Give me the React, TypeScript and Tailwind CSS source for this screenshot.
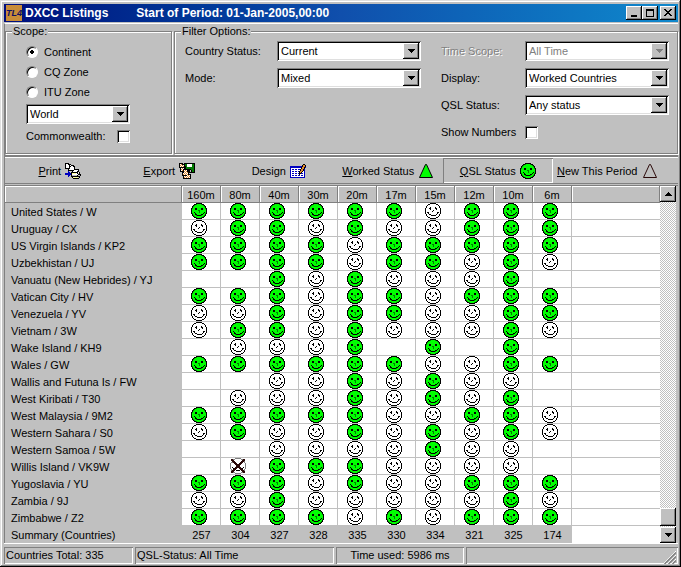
/**
 * DXCC listings window.
 * Filter panel, report toolbar, band/country confirmation grid and status bar.
 */
import { useState } from 'react'
import type { ReactNode } from 'react'
import clsx from 'clsx'

const SUNKEN =
  'bg-white shadow-[inset_1px_1px_0_#808080,inset_-1px_-1px_0_#fff,inset_2px_2px_0_#000,inset_-2px_-2px_0_#dfdfdf]'
const RAISED =
  'bg-[#c0c0c0] shadow-[inset_-1px_-1px_0_#000,inset_1px_1px_0_#fff,inset_-2px_-2px_0_#808080]'

const BANDS = ['160m', '80m', '40m', '30m', '20m', '17m', '15m', '12m', '10m', '6m']
const TOTALS = [257, 304, 327, 328, 335, 330, 334, 321, 325, 174]

// G = confirmed, W = worked, X = rejected, . = nothing
const COUNTRIES: [string, string][] = [
  ['United States / W', 'GGGGGGWGGG'],
  ['Uruguay / CX', 'WGGWGWWGGG'],
  ['US Virgin Islands / KP2', 'GGGGWGGGGG'],
  ['Uzbekhistan / UJ', 'GGGGWGGWGW'],
  ['Vanuatu (New Hebrides) / YJ', '..GWGWWWG.'],
  ['Vatican City / HV', 'GGGWGGWGGG'],
  ['Venezuela / YV', 'WWGWGGWWGG'],
  ['Vietnam / 3W', 'WGGWGWWWGW'],
  ['Wake Island / KH9', '.WWWG.G.G.'],
  ['Wales / GW', 'GGGGGGWWGG'],
  ['Wallis and Futuna Is / FW', '..WWGWGWW.'],
  ['West Kiribati / T30', '.WWWGWGWG.'],
  ['West Malaysia / 9M2', 'GGGGGWWGGW'],
  ['Western Sahara / S0', 'WGWWGWGWGW'],
  ['Western Samoa / 5W', '..WWWWGWW.'],
  ['Willis Island / VK9W', '.XGGGWWWW.'],
  ['Yugoslavia / YU', 'GGGWGWWGGG'],
  ['Zambia / 9J', 'WWGWWWWWGW'],
  ['Zimbabwe / Z2', 'GGGGWGWGGG'],
]

const PALETTE: Record<string, string> = {
  k: '#000000',
  K: '#2a0808',
  w: '#ffffff',
  e: '#00ff00',
  d: '#008000',
  n: '#007b00',
  s: '#808080',
  l: '#c0c0c0',
  b: '#0000c0',
  y: '#ffff9c',
  o: '#e08830',
}

const GREEN_FACE = [
  '.....kkkkkk.....',
  '...kkdeeeedkk...',
  '..kdeeeeeeeedk..',
  '.kdeeeeeeeeeedk.',
  '.keeeeeeeeeeeek.',
  'kdeekkeeeekkeedk',
  'keeekkeeeekkeeek',
  'keeeeeeddeeeeeek',
  'keeeeeeedeeeeeek',
  'keekeeeedeeeekek',
  'kdeekeeeeeeekedk',
  '.keekkeeeekkeek.',
  '.kdeedkkkkdeedk.',
  '..kdeeeeeeeedk..',
  '...kkdeeeedkk...',
  '.....kkkkkk.....',
]

const WHITE_FACE = [
  '.....kkkkkk.....',
  '...kkwwwwwwkk...',
  '..kwwwwwwwwwwk..',
  '.kwwwwwwwwwwwwk.',
  '.kwwwkwwwwkwwwk.',
  'kwwwkkwwwwkkwwwk',
  'kwwwwkwwwwwkwwwk',
  'kwwwwwwwkwwwwwwk',
  'kwwwwwwkwwwwwwwk',
  'kwkkwwwwwwwwkkwk',
  'kwwkwwwwwwwwkwwk',
  '.kwwkkwwwwwkwwk.',
  '.kwwwwkkkkkwwwk.',
  '..kwwwwwwwwwwk..',
  '...kkwwwwwwkk...',
  '.....kkkkkk.....',
]

const CROSSED_FACE = [
  '.....ssssss.....',
  '.KKsswwwwwwssKK.',
  '.KKKwwwwwwwwKKK.',
  '..KKKwwwwwwKKKs.',
  '.ssKKKwwwwKKKws.',
  'swwwKKKwwKKKwwws',
  'swwwwKKKKKKwwwws',
  'swwwwwKKKKwwwwws',
  'swwwwwKKKKwwwwws',
  'swkwwKKKKKKwwkws',
  'swwkKKKwwKKKkwws',
  '.swKKKwwwwKKKws.',
  '.sKKKwkkkkwKKKs.',
  '.KKKwwwwwwwwKKK.',
  '.KKsswwwwwwssKK.',
  '.....ssssss.....',
]

const PRINTER = [
  'kkkk............',
  'kwwkkk..........',
  'kwwwkwkkk.......',
  'kwwwkkwwkk......',
  'kwwwkwwwwk......',
  'kkkkkwwwwk......',
  '...kwwwwwkkkkk..',
  '...kkkkkkwwwwk..',
  '...b...kwwwwkk..',
  '...bb.kkkkkkkwk.',
  'bbbbbbkyyyywklk.',
  'bbbbbbkwwwwwwkkk',
  '...bb.klllllkllk',
  '...b..kkkkkkkkk.',
  '.......kyyyyylk.',
  '........kkkkkk..',
]

const EXPORT = [
  'kkkk.kkkkkkkkkkk',
  'kwokkknnwwwwwnnk',
  'kowowknnwwwwwnnk',
  'kwowokknwwwwwnnk',
  'kkkkkkknnnnnnnnk',
  '.kwowkknnnnnnnnk',
  '.kowkkkkkkkknnnk',
  '.kwokwowkkklknnk',
  '.kkkkowokkklknnk',
  '...kkwowokkkkkkk',
  '...kwowowk......',
  '...kowowokkk....',
  '...kkkkkwowk....',
  '....kwowowok....',
  '....kowowowk....',
  '....kkkkkkkk....',
]

const DESIGN = [
  '.............kk.',
  '............kook',
  'bbbbbbbbbbbbkook',
  'bbbbbbbbbbbkookb',
  'bwwwwwwwwwwkook.',
  'bwbbwbbwbbkookb.',
  'bwwwwwwwwwkookb.',
  'bwbbwbbwbkookwb.',
  'bwwwwwwwwkokwwb.',
  'bwbbwbbwbkkbbwb.',
  'bwwwwwwwwkwwwwb.',
  'bwbbwbbwbbwbbwb.',
  'bwwwwwwwwwwwwwb.',
  'bbbbbbbbbbbbbbb.',
]

function Bitmap({ rows }: { rows: string[] }) {
  return (
    <svg
      width={rows[0].length}
      height={rows.length}
      shapeRendering="crispEdges"
      className="block shrink-0"
      aria-hidden="true"
    >
      {rows.flatMap((row, y) =>
        [...row].map((c, x) =>
          c === '.' ? null : <rect key={`${x}-${y}`} x={x} y={y} width="1" height="1" fill={PALETTE[c]} />
        )
      )}
    </svg>
  )
}

function Triangle({ fill, stroke }: { fill: string; stroke: string }) {
  return (
    <svg width="16" height="16" className="block shrink-0" aria-hidden="true">
      <path d="M7.5 1.5 1.5 14.5H14.5L8.5 1.5Z" fill={fill} stroke={stroke} />
    </svg>
  )
}

function Arrow({ up, disabled }: { up?: boolean; disabled?: boolean }) {
  return (
    <svg width="7" height="4" shapeRendering="crispEdges" aria-hidden="true">
      <path d={up ? 'M3 0H4V1H5V2H6V3H7V4H0V3H1V2H2V1H3Z' : 'M0 0H7V1H6V2H5V3H4V4H3V3H2V2H1V1H0Z'} fill={disabled ? '#808080' : '#000'} />
    </svg>
  )
}

interface ComboProps {
  id: string
  label?: string
  options: string[]
  disabled?: boolean
  className?: string
}

function Combo({ id, label, options, disabled, className }: ComboProps) {
  return (
    <div className={clsx('relative h-5 shrink-0', className)}>
      <select
        id={id}
        aria-label={label}
        disabled={disabled}
        className={clsx(
          'block h-5 w-full appearance-none pr-5 pl-1 leading-5 outline-none',
          SUNKEN,
          disabled ? 'text-[#808080] opacity-100' : 'text-black'
        )}
      >
        {options.map((o) => (
          <option key={o}>{o}</option>
        ))}
      </select>
      <span
        className={clsx(
          'pointer-events-none absolute top-0.5 right-0.5 flex h-4 w-4 items-center justify-center',
          RAISED
        )}
      >
        <Arrow disabled={disabled} />
      </span>
    </div>
  )
}

function Field({ id, label, disabled, children }: { id: string; label: string; disabled?: boolean; children: ReactNode }) {
  return (
    <div className="flex h-5 items-center justify-between">
      <label htmlFor={id} className={clsx(disabled && 'text-[#808080] [text-shadow:1px_1px_0_#fff]')}>
        {label}
      </label>
      {children}
    </div>
  )
}

function Group({ title, className, children }: { title: string; className?: string; children: ReactNode }) {
  return (
    <fieldset
      className={clsx(
        'h-[130px] border border-[#808080] shadow-[1px_1px_0_#fff,inset_1px_1px_0_#fff]',
        className
      )}
    >
      <legend className="ml-1.5 bg-[#c0c0c0] px-px leading-[14px]">{title}</legend>
      {children}
    </fieldset>
  )
}

function ToolButton({ text, hotkey, active, onClick, children }: {
  text: string
  hotkey?: boolean
  active?: boolean
  onClick?: () => void
  children: ReactNode
}) {
  return (
    <button
      onClick={onClick}
      className={clsx(
        'flex h-[25px] items-center justify-center gap-1 pt-px whitespace-nowrap',
        active && 'shadow-[inset_1px_1px_0_#808080,inset_-1px_-1px_0_#fff]'
      )}
    >
      <span>
        {hotkey ? <span className="underline">{text[0]}</span> : text[0]}
        {text.slice(1)}
      </span>
      {children}
    </button>
  )
}

function TitleButton({ label, children }: { label: string; children: ReactNode }) {
  return (
    <button aria-label={label} className={clsx('flex h-3.5 w-4 items-center justify-center', RAISED)}>
      <svg width="10" height="10" shapeRendering="crispEdges" fill="none" stroke="#000">
        {children}
      </svg>
    </button>
  )
}

function FilterPanel() {
  const [scope, setScope] = useState('Continent')

  return (
    <div className="flex gap-0.5 pb-px">
      <Group title="Scope:" className="w-[167px] shrink-0">
        <div className="flex flex-col pt-1 pl-5">
          {['Continent', 'CQ Zone', 'ITU Zone'].map((s) => (
            <label key={s} className="flex h-5 items-center gap-1.5">
              <input
                type="radio"
                name="scope"
                checked={scope === s}
                onChange={() => setScope(s)}
                className="size-3 appearance-none rounded-full border border-[#808080] border-r-white border-b-white bg-white shadow-[inset_1px_1px_0_#000] checked:bg-[radial-gradient(circle,#000_2px,#fff_2px)]"
              />
              {s}
            </label>
          ))}
        </div>
        <div className="mt-0.5 ml-5 w-[104px]">
          <Combo id="area" label="Area" options={['World', 'Europe', 'Asia', 'Africa']} />
          <div className="mt-1.5 flex items-center justify-between">
            <label htmlFor="commonwealth">Commonwealth:</label>
            <input id="commonwealth" type="checkbox" className={clsx('size-[13px] appearance-none', SUNKEN)} />
          </div>
        </div>
      </Group>

      <Group title="Filter Options:" className="min-w-0 flex-1">
        <div className="flex justify-between pt-[3px] pr-2 pl-2.5">
          <div className="flex w-[236px] flex-col gap-[7px]">
            <Field id="country" label="Country Status:">
              <Combo id="country" className="w-36" options={['Current', 'Deleted', 'All']} />
            </Field>
            <Field id="mode" label="Mode:">
              <Combo id="mode" className="w-36" options={['Mixed', 'CW', 'Phone', 'Digital']} />
            </Field>
          </div>
          <div className="flex w-[228px] flex-col gap-[7px]">
            <Field id="time" label="Time Scope:" disabled>
              <Combo id="time" className="w-36" options={['All Time']} disabled />
            </Field>
            <Field id="display" label="Display:">
              <Combo id="display" className="w-36" options={['Worked Countries', 'All Countries']} />
            </Field>
            <Field id="qsl" label="QSL Status:">
              <Combo id="qsl" className="w-36" options={['Any status', 'Confirmed']} />
            </Field>
            <Field id="numbers" label="Show Numbers">
              <span className="flex w-36">
                <input id="numbers" type="checkbox" className={clsx('size-[13px] appearance-none', SUNKEN)} />
              </span>
            </Field>
          </div>
        </div>
      </Group>
    </div>
  )
}

function Toolbar() {
  const [view, setView] = useState('QSL Status')

  return (
    <div className="border-t-2 border-b border-t-[#808080] border-b-[#808080]">
      <div className="grid grid-cols-6 border-t border-white pr-4">
        <ToolButton text="Print" hotkey><Bitmap rows={PRINTER} /></ToolButton>
        <ToolButton text="Export" hotkey><Bitmap rows={EXPORT} /></ToolButton>
        <ToolButton text="Design"><Bitmap rows={DESIGN} /></ToolButton>
        <ToolButton text="Worked Status" hotkey active={view === 'Worked Status'} onClick={() => setView('Worked Status')}>
          <Triangle fill="#00ff00" stroke="#000" />
        </ToolButton>
        <ToolButton text="QSL Status" hotkey active={view === 'QSL Status'} onClick={() => setView('QSL Status')}>
          <Bitmap rows={GREEN_FACE} />
        </ToolButton>
        <ToolButton text="New This Period" hotkey active={view === 'New'} onClick={() => setView('New')}>
          <Triangle fill="none" stroke="#2a0808" />
        </ToolButton>
      </div>
    </div>
  )
}

function Face({ status }: { status: string }) {
  if (status === 'G') return <Bitmap rows={GREEN_FACE} />
  if (status === 'W') return <Bitmap rows={WHITE_FACE} />
  if (status === 'X') return <Bitmap rows={CROSSED_FACE} />
  return null
}

function ListingTable() {
  const head = 'h-[17px] p-0 pt-0.5 font-normal border-r border-b border-[#808080] shadow-[inset_1px_1px_0_#fff] leading-[14px]'

  return (
    <table className="w-full table-fixed border-separate border-spacing-0">
      <colgroup>
        <col className="w-[177px]" />
        {BANDS.map((b) => <col key={b} className="w-[39px]" />)}
        <col />
      </colgroup>
      <thead>
        <tr>
          <th className={head} aria-label="Country" />
          {BANDS.map((b) => <th key={b} className={head} scope="col">{b}</th>)}
          <th className={head} aria-label="Notes" />
        </tr>
      </thead>
      <tbody>
        {COUNTRIES.map(([name, marks]) => (
          <tr key={name}>
            <th scope="row" className="h-[17px] p-0 pl-1.5 text-left leading-4 font-normal whitespace-nowrap">{name}</th>
            {[...marks].map((m, i) => (
              <td key={BANDS[i]} className="h-[17px] border-r border-b border-[#c0c0c0] bg-white p-0 pl-[9px]">
                <Face status={m} />
              </td>
            ))}
            <td className="h-[17px] border-b border-[#c0c0c0] bg-white p-0" />
          </tr>
        ))}
      </tbody>
      <tfoot>
        <tr>
          <th scope="row" className="h-[17px] p-0 pl-1.5 text-left leading-4 font-normal">Summary (Countries)</th>
          {TOTALS.map((n, i) => (
            <td key={BANDS[i]} className="h-[17px] p-0 text-center leading-4">{n}</td>
          ))}
          <td className="h-[17px] bg-white p-0" />
        </tr>
      </tfoot>
    </table>
  )
}

function ScrollBar() {
  return (
    <div className="flex w-4 shrink-0 flex-col bg-[repeating-conic-gradient(#fff_0_25%,#c0c0c0_0_50%)] bg-size-[2px_2px]">
      <button aria-label="Scroll up" className={clsx('flex h-4 items-center justify-center', RAISED)}>
        <Arrow up />
      </button>
      <div className="flex-1" />
      <div className={clsx('h-[18px]', RAISED)} />
      <button aria-label="Scroll down" className={clsx('mt-px flex h-4 items-center justify-center', RAISED)}>
        <Arrow />
      </button>
    </div>
  )
}

function StatusBar() {
  const cell = 'h-[17px] px-0.5 leading-[17px] whitespace-nowrap shadow-[inset_1px_1px_0_#808080,inset_-1px_-1px_0_#fff]'

  return (
    <div className="grid grid-cols-[129px_199px_128px_1fr] gap-0.5 border-t border-white pt-[3px]">
      <div className={cell}>Countries Total: 335</div>
      <div className={cell}>QSL-Status: All Time</div>
      <div className={clsx(cell, 'text-center')}>Time used: 5986 ms</div>
      <div className={clsx(cell, 'flex items-end justify-end')}>
        <svg width="13" height="13" aria-hidden="true">
          <path d="M0 13 13 0M4 13 13 4M8 13 13 8" stroke="#fff" />
          <path d="M1.5 13 13 1.5M5.5 13 13 5.5M9.5 13 13 9.5" stroke="#808080" strokeWidth="1.5" />
        </svg>
      </div>
    </div>
  )
}

export default function App() {
  return (
    <div className="bg-[#c0c0c0] pr-[3px] pb-[3px] pl-[3px] font-['Liberation_Sans',Arial,sans-serif] text-[11px] leading-[13px] text-black shadow-[inset_-1px_-1px_0_#000,inset_1px_1px_0_#dfdfdf,inset_-2px_-2px_0_#808080,inset_2px_2px_0_#fff]">
      <div className="pt-1 pl-px">
        {/* Title bar */}
        <header className="flex h-[18px] items-center bg-linear-to-r from-[#000c7c] via-[#104fac] to-[#1088cc] pr-0.5 pl-0.5 text-[12px] font-bold text-white">
          <span className="mr-[3px] flex size-4 items-center justify-center bg-[#c88c38] text-[9px] text-[#101060] italic">
            TL4
          </span>
          <h1 className="mr-7 whitespace-nowrap">DXCC Listings</h1>
          <span className="flex-1 whitespace-nowrap">Start of Period: 01-Jan-2005,00:00</span>
          <TitleButton label="Minimize"><path d="M2 8H8M2 7H8" /></TitleButton>
          <TitleButton label="Maximize"><path d="M1 1.5H9M1.5 1V9M8.5 1V9M1 8.5H9M1 2H9" /></TitleButton>
          <span className="w-0.5" />
          <TitleButton label="Close">
            <path d="M1 1H3V2H4V3H6V2H7V1H9V2H8V3H7V4H6V5H7V6H8V7H9V8H7V7H6V6H4V7H3V8H1V7H2V6H3V5H4V4H3V3H2V2H1Z" fill="#000" stroke="none" />
          </TitleButton>
        </header>

        <main className="mt-px border-t border-l border-t-white border-l-[#808080]">
          <FilterPanel />
          <Toolbar />
          <div className="mt-px flex border-t border-[#808080] pr-0.5">
            <div className="min-w-0 flex-1"><ListingTable /></div>
            <ScrollBar />
          </div>
        </main>

        <StatusBar />
      </div>
    </div>
  )
}
